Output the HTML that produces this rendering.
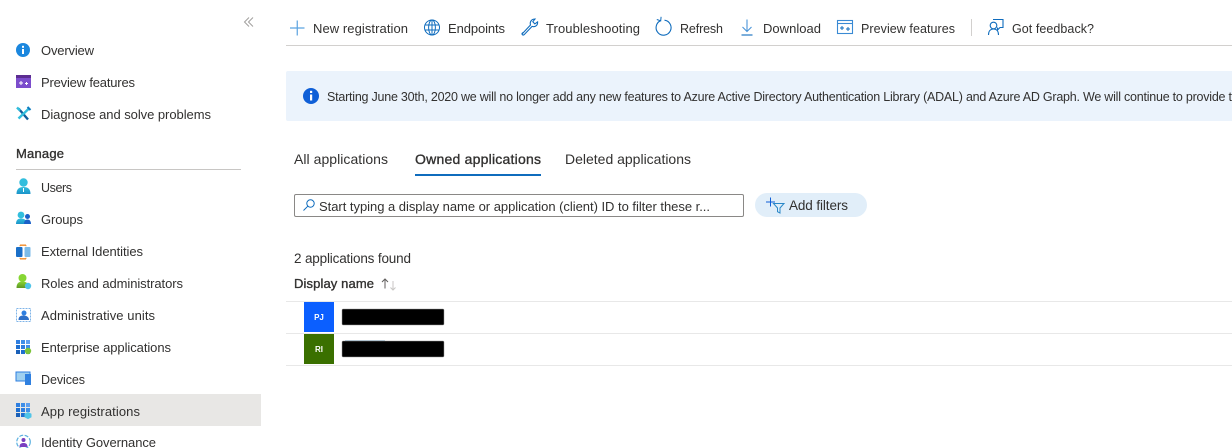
<!DOCTYPE html>
<html lang="en"><head><meta charset="utf-8"><title>App registrations</title>
<style>
html,body{margin:0;padding:0;background:#fff;width:1232px;height:448px;overflow:hidden}
svg{display:block}
text{font-family:"Liberation Sans",sans-serif;font-size:13px;fill:#323130}
.b{stroke:#323130;stroke-width:.35px}
.s{font-size:12.500px}
.t{font-size:14px}
.m{font-size:13.500px}
</style></head><body>
<svg xmlns="http://www.w3.org/2000/svg" width="1232" height="448" viewBox="0 0 1232 448">
<defs>
<linearGradient id="bl" x1="0" y1="0" x2="0" y2="1"><stop offset="0" stop-color="#5ea0ef"/><stop offset="1" stop-color="#0078d4"/></linearGradient>
<linearGradient id="cy" x1="0" y1="0" x2="0" y2="1"><stop offset="0" stop-color="#32bedd"/><stop offset="1" stop-color="#1b93c9"/></linearGradient>
<linearGradient id="gr" x1="0" y1="0" x2="0" y2="1"><stop offset="0" stop-color="#86d633"/><stop offset="1" stop-color="#5e9624"/></linearGradient>
<g id="grid"><rect x="0" y="0" width="4" height="4" fill="#2f7fe0"/><rect x="5" y="0" width="4" height="4" fill="#3f8fe8"/><rect x="10" y="0" width="4" height="4" fill="#5ea0ef"/><rect x="0" y="5" width="4" height="4" fill="#1e6fd0"/><rect x="5" y="5" width="4" height="4" fill="#2f7fe0"/><rect x="10" y="5" width="4" height="4" fill="#3f8fe8"/><rect x="0" y="10" width="4" height="4" fill="#1a60b8"/><rect x="5" y="10" width="4" height="4" fill="#1e6fd0"/><rect x="10" y="10" width="4" height="4" fill="#2f7fe0"/></g>
</defs>

<!-- Sidebar -->
<path d="M249 17.500l-4.500 4.500 4.500 4.500M253 17.500l-4.500 4.500 4.500 4.500" fill="none" stroke="#a19f9d" stroke-width="1"/>
<rect x="0" y="394" width="261" height="32" fill="#e8e7e5"/>
<rect x="16" y="169" width="225" height="1" fill="#c8c6c4"/>

<circle cx="23" cy="50" r="7" fill="#1b87de"/><rect x="22" y="49" width="2" height="5" fill="#fff"/><rect x="22" y="45.800" width="2" height="2" fill="#fff"/>
<rect x="16" y="75" width="15" height="3" fill="#5c2d91"/><rect x="16" y="78" width="15" height="10" fill="#7c4dcc"/><path d="M19 83h4M21 81v4M25 83.500h3M26.500 82v3" stroke="#fff" stroke-width="1"/>
<path d="M18.500 108.500l9.500 11" stroke="#0f5c9a" stroke-width="2.400"/><path d="M29.500 108l-11 10.500" stroke="#32bedd" stroke-width="2.400"/><path d="M17 107.500l3 3" stroke="#32bedd" stroke-width="2.500"/><path d="M27.500 107l3 3" stroke="#0f7cc0" stroke-width="2"/>

<circle cx="23.500" cy="182.500" r="4.200" fill="#32bedd"/><path d="M16.500 194c0-5 2.500-7 7-7s7 2 7 7z" fill="url(#cy)"/><path d="M23.500 188v4" stroke="#fff" stroke-width="1"/>
<circle cx="21" cy="215" r="3.400" fill="#32bedd"/><path d="M16 224c0-4 2-5.500 5-5.500s6 1.500 6 5.500z" fill="url(#cy)"/><circle cx="27.500" cy="216.500" r="2.500" fill="#1a60c8"/><path d="M24 224c0-3 1.500-4.500 3.500-4.500s3.500 1.500 3.500 4.500z" fill="#1a60c8"/>
<rect x="16" y="247" width="6.500" height="10" rx="1" fill="#1a6fc8"/><rect x="24.500" y="247" width="6" height="10" rx="1" fill="#7cbbe8"/><path d="M20 245.200h6M20 258.800h6" stroke="#f08a24" stroke-width="1.300" fill="none"/><path d="M20 245.200v1M26 245.200v1M20 258.800v-1M26 258.800v-1" stroke="#f08a24" stroke-width="1"/>
<circle cx="22.500" cy="278" r="4" fill="#86d633"/><path d="M16.500 288c0-5 2.500-6.500 6-6.500s6 1.500 6 6.500z" fill="url(#gr)"/><circle cx="28" cy="286" r="3.200" fill="#50c4e8"/>
<rect x="16.500" y="308.500" width="14" height="13" fill="none" stroke="#7fb4e8" stroke-width="1" stroke-dasharray="2 1"/><circle cx="24" cy="313" r="2.500" fill="#2f7fe0"/><path d="M18.500 320c0-3.500 2-4.500 5-4.500s5.500 1.500 5.500 4.500z" fill="#2f70c8"/>
<use href="#grid" x="16" y="340"/><circle cx="28" cy="351" r="3.200" fill="#7cc43a"/>
<rect x="16" y="372" width="14" height="9" fill="#9fd0f0" stroke="#2f7fe0" stroke-width="1"/><rect x="25" y="374" width="6" height="11" fill="#2f80e0"/>
<use href="#grid" x="16" y="403"/><path d="M28 412l3.500 1.800v3.500l-3.500 1.800-3.500-1.800v-3.500z" fill="#50c4e8"/>
<circle cx="23.500" cy="442" r="6.800" fill="none" stroke="#5ab0e0" stroke-width="1.200" stroke-dasharray="4 1.500"/><circle cx="23.500" cy="440" r="2" fill="#7a3fc0"/><path d="M19.500 447c0-3 1.500-4 4-4s4 1 4 4z" fill="#7a3fc0"/>

<text x="41" y="55" textLength="53" lengthAdjust="spacing">Overview</text>
<text x="41" y="87" textLength="94" lengthAdjust="spacing">Preview features</text>
<text x="41" y="119" textLength="170" lengthAdjust="spacing">Diagnose and solve problems</text>
<text x="16" y="158" class="b" textLength="48" lengthAdjust="spacing">Manage</text>
<text x="41" y="192" class="s" textLength="31" lengthAdjust="spacing">Users</text>
<text x="41" y="224" textLength="42" lengthAdjust="spacing">Groups</text>
<text x="41" y="256" textLength="102" lengthAdjust="spacing">External Identities</text>
<text x="41" y="288" textLength="142" lengthAdjust="spacing">Roles and administrators</text>
<text x="41" y="320" textLength="114" lengthAdjust="spacing">Administrative units</text>
<text x="41" y="352" textLength="130" lengthAdjust="spacing">Enterprise applications</text>
<text x="41" y="384" class="s" textLength="44" lengthAdjust="spacing">Devices</text>
<text x="41" y="416" textLength="99" lengthAdjust="spacing">App registrations</text>
<text x="41" y="447" textLength="115" lengthAdjust="spacing">Identity Governance</text>

<!-- Toolbar -->
<rect x="286" y="45" width="946" height="1" fill="#d2d0ce"/>
<path d="M290 28h14.500M297.250 20.500v15" stroke="#5ba3e0" stroke-width="1.200"/>
<g fill="none" stroke="#0f6cbd" stroke-width="1"><circle cx="432" cy="27.500" r="7.500"/><ellipse cx="432" cy="27.500" rx="3.400" ry="7.500"/><path d="M425 25h14M425 30h14M432 20v15"/></g>
<path d="M522.500 33.500l8-8.500c-1-3 1-6 4.500-6l-2.200 2.700 2 2.200 2.800-2c.3 3.500-2.500 5.500-5.500 4.500l-8 8.300c-1.300 1-3-.8-1.600-1.700z" fill="none" stroke="#0f6cbd" stroke-width="1.100"/>
<path d="M660.500 20.800a7.500 7.500 0 1 0 4-.6" fill="none" stroke="#0f6cbd" stroke-width="1.100"/><path d="M656.800 19.500l3.900 1.300.4-4" fill="none" stroke="#0f6cbd" stroke-width="1"/>
<path d="M747 19.500v12M742.500 27l4.500 4.500 4.500-4.500" fill="none" stroke="#4a94d8" stroke-width="1.100"/><path d="M741.500 35h11" stroke="#0f6cbd" stroke-width="1.100"/>
<rect x="837.500" y="20.500" width="15" height="13" fill="none" stroke="#3a8ad4" stroke-width="1.100"/><path d="M837.500 23.500h15" stroke="#3a8ad4" stroke-width="1.100"/><path d="M840 28h4M842 26v4M846 29h4M848 27v4" stroke="#0f6cbd" stroke-width="1"/>
<rect x="971" y="19" width="1" height="17" fill="#d2d0ce"/>
<path d="M993 19.500h10v8h-3l-2.500 2.500v-2.500M988.500 35c0-4 2-6 5-6s5 2 5 6" fill="none" stroke="#0f6cbd" stroke-width="1.100"/><circle cx="993.500" cy="25.500" r="3.300" fill="#fff" stroke="#0f6cbd" stroke-width="1.100"/>
<text x="313" y="33" textLength="95" lengthAdjust="spacing">New registration</text>
<text x="448" y="33" textLength="57" lengthAdjust="spacing">Endpoints</text>
<text x="546" y="33" textLength="94" lengthAdjust="spacing">Troubleshooting</text>
<text x="680" y="33" class="s" textLength="43" lengthAdjust="spacing">Refresh</text>
<text x="763" y="33" textLength="58" lengthAdjust="spacing">Download</text>
<text x="861" y="33" class="s" textLength="94" lengthAdjust="spacing">Preview features</text>
<text x="1012" y="33" class="s" textLength="82" lengthAdjust="spacing">Got feedback?</text>

<!-- Banner -->
<path d="M288 71h944v50H288a2 2 0 0 1-2-2V73a2 2 0 0 1 2-2z" fill="#ebf3fc"/>
<circle cx="311" cy="96" r="8" fill="#0f5fd7"/><rect x="310" y="94.500" width="2.200" height="6" fill="#fff"/><rect x="310" y="90.800" width="2.200" height="2.200" fill="#fff"/>
<text x="327" y="101" class="s" textLength="905" lengthAdjust="spacing">Starting June 30th, 2020 we will no longer add any new features to Azure Active Directory Authentication Library (ADAL) and Azure AD Graph. We will continue to provide t</text>

<!-- Tabs -->
<text x="294" y="164" class="t" textLength="94" lengthAdjust="spacing">All applications</text>
<text x="415" y="164" class="t b" textLength="126" lengthAdjust="spacing">Owned applications</text>
<text x="565" y="164" class="t" textLength="126" lengthAdjust="spacing">Deleted applications</text>
<rect x="415" y="174" width="126" height="2" fill="#0f6cbd"/>

<!-- Filters -->
<rect x="294.500" y="194.500" width="449" height="22" rx="1.500" fill="#fff" stroke="#8a8886"/>
<circle cx="310.500" cy="203.500" r="3.700" fill="none" stroke="#0f6cbd" stroke-width="1"/><path d="M307.800 206.200l-4.300 4.300" stroke="#0f6cbd" stroke-width="1"/>
<text x="319" y="211" textLength="391" lengthAdjust="spacing">Start typing a display name or application (client) ID to filter these r...</text>
<rect x="755" y="193" width="112" height="24" rx="12" fill="#e1eef9"/>
<path d="M766 202h9M770.500 197.500v9" stroke="#0f5fd7" stroke-width="1"/>
<path d="M773.500 203.500h10.500l-4 4.500v5l-2.500-1.300v-3.700z" fill="none" stroke="#2a88c8" stroke-width="1"/>
<text x="789" y="210" class="m" textLength="59" lengthAdjust="spacing">Add filters</text>

<!-- Table -->
<text x="294" y="263" class="m" textLength="117" lengthAdjust="spacing">2 applications found</text>
<text x="294" y="288" class="b" textLength="80" lengthAdjust="spacing">Display name</text>
<path d="M385 288.500v-9M382 282l3-3 3 3" fill="none" stroke="#605e5c" stroke-width="1"/>
<path d="M393 281v9M390.500 287.500l2.500 2.500 2.500-2.500" fill="none" stroke="#c8c6c4" stroke-width="1"/>
<rect x="286" y="301" width="946" height="1" fill="#e8e8e8"/>
<rect x="286" y="333" width="946" height="1" fill="#e8e8e8"/>
<rect x="286" y="365" width="946" height="1" fill="#e8e8e8"/>
<rect x="304" y="302" width="30" height="30" fill="#0b5fff"/>
<rect x="304" y="334" width="30" height="30" fill="#3a7000"/>
<text x="319" y="320" text-anchor="middle" style="font-size:8px;font-weight:700;fill:#fff">PJ</text>
<text x="319" y="352" text-anchor="middle" style="font-size:8px;font-weight:700;fill:#fff">RI</text>
<rect x="345" y="340" width="40" height="1" fill="#b8cfe0"/>
<rect x="342" y="309" width="102" height="16" rx="1" fill="#000" stroke="#999" stroke-width=".5"/>
<rect x="342" y="341" width="102" height="16" rx="1" fill="#000" stroke="#999" stroke-width=".5"/>
</svg>
</body></html>
